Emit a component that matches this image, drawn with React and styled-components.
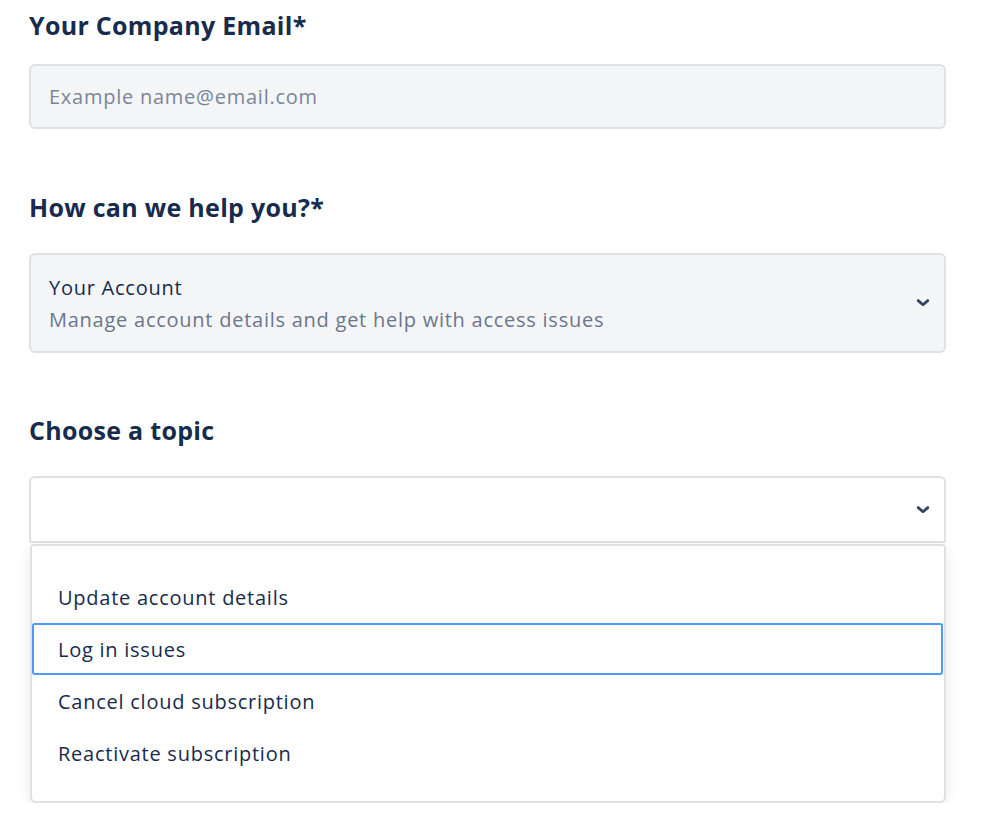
import React from 'react';
import styled, { createGlobalStyle } from 'styled-components';

const GlobalStyle = createGlobalStyle`
  body {
    margin: 0;
    background: #fff;
    font-family: 'Open Sans', 'Noto Sans', sans-serif;
    color: #172b4d;
  }
`;

const Form = styled.div`
  width: 917px;
  padding: 8px 0 0 29px;
  display: flex;
  flex-direction: column;
`;

const Field = styled.div`
  display: flex;
  flex-direction: column;
  margin-bottom: ${(p) => p.gap || 0}px;
`;

const Label = styled.div`
  font-size: 25px;
  font-weight: 700;
  letter-spacing: 0.3px;
  line-height: 34px;
  color: #172b4d;
  margin-bottom: ${(p) => p.space || 22}px;
`;

const Box = styled.div`
  box-sizing: border-box;
  height: ${(p) => p.h}px;
  border: 2px solid #dfe1e6;
  border-radius: ${(p) => (p.open ? '6px 6px 2px 2px' : '6px')};
  background: ${(p) => (p.light ? '#fff' : '#f4f5f7')};
  display: flex;
  align-items: center;
  padding: 0 18px;
  font-size: 20px;
  letter-spacing: 0.75px;
`;

const Placeholder = styled.span`
  color: #7a869a;
`;

const SelectText = styled.div`
  flex: 1;
  display: flex;
  flex-direction: column;
  gap: 5px;
`;

const Title = styled.span`
  color: #172b4d;
`;

const Sub = styled.span`
  color: #6b778c;
`;

const Chevron = () => (
  <svg width="14" height="10" viewBox="0 0 14 10" style={{ marginRight: -4 }}>
    <path d="M2.2 2.6l4.8 4.2 4.8-4.2" fill="none" stroke="#344563" strokeWidth="2.8" strokeLinecap="round" strokeLinejoin="round" />
  </svg>
);

const Spacer = styled.div`
  flex: 1;
`;

const Menu = styled.div`
  box-sizing: border-box;
  margin: 1px 0 0 1px;
  height: 259px;
  border: 2px solid #dfe1e6;
  border-radius: 4px 4px 6px 6px;
  background: #fff;
  box-shadow: 0 4px 14px rgba(9, 30, 66, 0.08);
  padding: 25px 0 0 0;
  display: flex;
  flex-direction: column;
`;

const Item = styled.div`
  box-sizing: border-box;
  height: 52px;
  display: flex;
  align-items: center;
  padding-left: 24px;
  font-size: 20px;
  letter-spacing: 0.75px;
  color: #172b4d;
  border: 2px solid ${(p) => (p.active ? '#4c9aff' : 'transparent')};
  border-radius: 3px;
  margin-right: 1px;
`;

const topics = [
  'Update account details',
  'Log in issues',
  'Cancel cloud subscription',
  'Reactivate subscription',
];

export default function App() {
  return (
    <>
      <GlobalStyle />
      <Form>
        <Field gap={61}>
          <Label>Your Company Email*</Label>
          <Box h={65}>
            <Placeholder>Example name@email.com</Placeholder>
          </Box>
        </Field>
        <Field gap={60}>
          <Label space={29}>How can we help you?*</Label>
          <Box h={100}>
            <SelectText>
              <Title>Your Account</Title>
              <Sub>Manage account details and get help with access issues</Sub>
            </SelectText>
            <Chevron />
          </Box>
        </Field>
        <Field>
          <Label space={29}>Choose a topic</Label>
          <Box h={67} light open>
            <Spacer />
            <Chevron />
          </Box>
          <Menu>
            {topics.map((t, i) => (
              <Item key={t} active={i === 1}>{t}</Item>
            ))}
          </Menu>
        </Field>
      </Form>
    </>
  );
}
